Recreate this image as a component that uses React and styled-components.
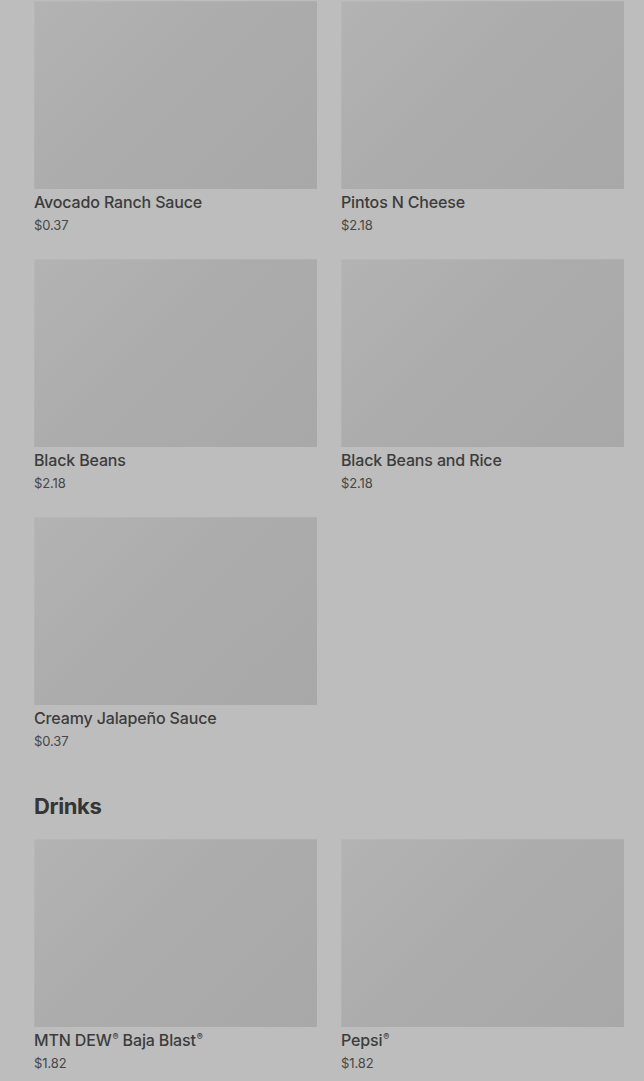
import React from "react";
import styled, { createGlobalStyle } from "styled-components";

const Global = createGlobalStyle`
  html, body { margin: 0; padding: 0; background: #bdbdbd; }
  body { font-family: Inter, "Noto Sans", "Liberation Sans", sans-serif; -webkit-font-smoothing: antialiased; }
`;

const Page = styled.main`
  padding: 1px 20px 40px 34px;
  display: flex;
  flex-direction: column;
`;

const Section = styled.section`
  display: flex;
  flex-direction: column;
  margin-top: ${(p) => (p.$first ? "0" : "42px")};
`;

const Heading = styled.h2`
  margin: 0 0 19px;
  font-size: 22px;
  line-height: 28px;
  font-weight: 700;
  letter-spacing: -0.4px;
  color: #353535;
`;

const Grid = styled.div`
  display: grid;
  grid-template-columns: 1fr 1fr;
  column-gap: 24px;
  row-gap: 25px;
`;

const Card = styled.div`
  display: flex;
  flex-direction: column;
`;

const Thumb = styled.div`
  height: 188px;
  background: linear-gradient(135deg, #b3b3b3 0%, #acacac 45%, #a8a8a8 100%);
  box-shadow: inset 1px 1px 0 rgba(255, 255, 255, 0.06);
`;

const Name = styled.div`
  margin-top: 3px;
  font-size: 16px;
  line-height: 20px;
  font-weight: 500;
  letter-spacing: -0.15px;
  color: #3c3c3c;
`;

const Reg = styled.span`
  font-size: 9px;
  vertical-align: 6px;
  line-height: 0;
  margin-left: 1px;
`;

const Price = styled.div`
  margin-top: 4px;
  font-size: 13px;
  line-height: 18px;
  letter-spacing: -0.1px;
  color: #474747;
`;

const sides = [
  { name: "Avocado Ranch Sauce", price: "$0.37" },
  { name: "Pintos N Cheese", price: "$2.18" },
  { name: "Black Beans", price: "$2.18" },
  { name: "Black Beans and Rice", price: "$2.18" },
  { name: "Creamy Jalapeño Sauce", price: "$0.37" },
];

const drinks = [
  { name: "MTN DEW® Baja Blast®", price: "$1.82" },
  { name: "Pepsi®", price: "$1.82" },
];

function renderName(name) {
  return name.split(/(®)/).map((part, i) =>
    part === "®" ? <Reg key={i}>®</Reg> : <React.Fragment key={i}>{part}</React.Fragment>
  );
}

function Item({ name, price }) {
  return (
    <Card>
      <Thumb />
      <Name>{renderName(name)}</Name>
      <Price>{price}</Price>
    </Card>
  );
}

export default function App() {
  return (
    <>
      <Global />
      <Page>
        <Section $first>
          <Grid>
            {sides.map((it) => (
              <Item key={it.name} {...it} />
            ))}
          </Grid>
        </Section>
        <Section>
          <Heading>Drinks</Heading>
          <Grid>
            {drinks.map((it) => (
              <Item key={it.name} {...it} />
            ))}
          </Grid>
        </Section>
      </Page>
    </>
  );
}
